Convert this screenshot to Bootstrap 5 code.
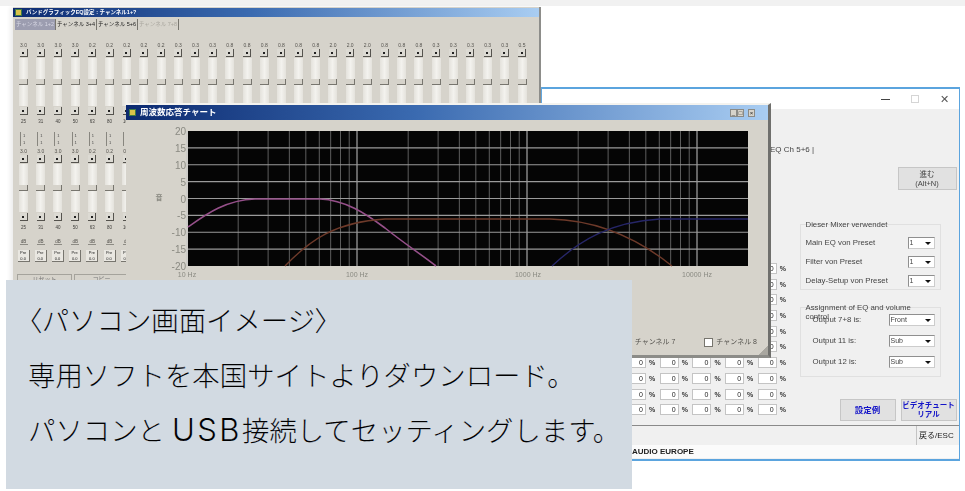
<!DOCTYPE html>
<html lang="ja">
<head>
    <meta charset="UTF-8">
    <meta name="viewport" content="width=device-width, initial-scale=1.0">
    <title>パソコン画面イメージ</title>
    <link href="https://cdn.jsdelivr.net/npm/bootstrap@5.3.0/dist/css/bootstrap.min.css" rel="stylesheet">
    <style>
        html, body { height: 491px; overflow: hidden; }
        body { background: #fff; font-family: "Liberation Sans", "Noto Sans CJK JP", sans-serif; color: #222; }
        .top-strip { height: 6px; background: #f1f1f1; }
        .desk { position: relative; width: 965px; height: 485px; }

        /* windows on the desktop */
        .win-eq, .win-chart, .win-setup { position: absolute; }
        .win-chart, .win-setup { filter: blur(.45px); }
        .win-eq { filter: blur(.7px); left: 13px; top: 1px; width: 528px; height: 285px; background: #d6d3cb; border-right: 2px solid #8d8d8a; box-shadow: -3px 0 4px #eee; overflow: hidden; }
        .win-chart { left: 126px; top: 97px; width: 645px; height: 255px; background: #d6d3cb; border-top: 2px solid #f4f3ef; border-right: 3px solid #6f6f6c; border-bottom: 3px solid #8c8c88; }
        .win-setup { left: 541px; top: 81px; width: 419px; height: 374px; background: #f0f0f0; border: 1px solid #5ba4de; border-top-width: 2px; border-bottom-width: 2px; }

        .bar-old { background: linear-gradient(90deg, #0c2a70 0%, #3a6ab0 45%, #a9cdf2 100%); color: #fff; font-weight: 700; }
        .eq-title { height: 9px; margin-top: 1px; font-size: 5.5px; line-height: 9px; padding-left: 2px; }
        .chart-title { height: 15px; font-size: 8.5px; line-height: 15px; padding-left: 3px; padding-right: 13px; }
        .app-ico { width: 7px; height: 7px; background: #d8c24a; border: 1px solid #3f7a44; }
        .old-ctl { width: 7px; height: 8px; background: #d6d3cb; border: 1px solid #8a8a86; color: #222; font-size: 6px; line-height: 6px; text-align: center; font-weight: 400; }

        .eq-tabs { margin: 2px 0 0 2px; height: 11px; font-size: 5.5px; line-height: 11px; white-space: nowrap; }
        .eq-tab { width: 41px; text-align: center; border-right: 1px solid #77756e; }
        .eq-tab-on { background: #9c9db0; color: #d8d8e4; }
        .eq-tab-off { color: #aaa79f; }

        .eq-rows { padding: 12px 0 0 2px; }
        .eq-col { width: 17.2px; flex: none; display: flex; flex-direction: column; align-items: center; }
        .eq-val { height: 6px; font-size: 5px; line-height: 6px; color: #55534e; }
        .eq-arrow { width: 8px; height: 8px; margin-top: 1px; background: #dcdad3; border-right: 1px solid #55534e; border-bottom: 1px solid #55534e; display: flex; align-items: center; justify-content: center; }
        .eq-arrow i { width: 2px; height: 2px; background: #222; }
        .eq-track { width: 9px; height: 48px; margin-top: 1px; background: linear-gradient(90deg, #e4e2dc, #f3f2ee 50%, #e4e2dc); position: relative; }
        .eq-knob { position: absolute; left: 0; top: 21px; width: 9px; height: 6px; background: #d6d3cb; border-right: 1px solid #77756e; border-bottom: 1px solid #77756e; }
        .eq-hz { height: 7px; margin-top: 3px; font-size: 4.5px; line-height: 7px; color: #3e3d3a; }
        .eq-db { height: 6px; margin-top: 8px; font-size: 4.5px; line-height: 6px; color: #55534e; border-bottom: 1px solid #8d8b84; width: 8px; text-align: center; }
        .eq-mini { width: 7px; height: 14px; margin-top: 7px; font-size: 4px; line-height: 7px; text-align: center; color: #444; border-left: 1px solid #88867f; }
        .eq-pre { width: 12px; height: 12px; margin-top: 5px; background: #e9e7e1; border-right: 1px solid #77756e; border-bottom: 1px solid #77756e; font-size: 4px; line-height: 6px; text-align: center; }
        .eq-row2 { margin-top: 2px; }
        .eq-foot { margin: 12px 0 0 2px; gap: 2px; }
        .eq-foot div { width: 55px; height: 16px; border: 1px solid #a5a39c; font-size: 6px; line-height: 8px; text-align: center; color: #777; }

        /* chart */
        .chart-body { height: 235px; }
        .chart-svg { display: block; }
        .chart-svg text { font-family: "Liberation Sans", "Noto Sans CJK JP", sans-serif; fill: #8a8a82; }
        .chart-checks { margin-top: auto; padding: 0 11px 8px 0; gap: 29px; font-size: 7px; line-height: 10px; color: #55534e; }
        .old-check { width: 9px; height: 9px; margin-right: 3px; background: #fff; border: 1px solid #77756e; }
        .chart-corner { position: absolute; right: 0; bottom: 0; width: 10px; height: 10px; background: linear-gradient(135deg, transparent 50%, #a9a7a0 50%); }

        /* setup window */
        .setup-head { height: 20px; background: #fff; padding-right: 10px; gap: 21px; font-size: 11px; color: #555; }
        .setup-btn-min { width: 9px; height: 1px; background: #444; }
        .setup-btn-max { width: 8px; height: 8px; border: 1px solid #d5d5d5; }
        .setup-tabs { height: 51px; padding: 36px 0 0 228px; font-size: 8px; line-height: 10px; color: #444; }
        .setup-left { width: 253px; padding: 103px 0 0 85px; }
        .pct-row { height: 15.7px; font-size: 7px; }
        .pct-cell { width: 19px; height: 11px; background: #fff; border: 1px solid #c4c4c4; font-size: 7px; line-height: 9px; text-align: right; padding-right: 2px; }
        .pct-unit { width: 13.7px; padding-left: 3px; font-size: 7px; line-height: 11px; font-weight: 700; color: #333; }
        .setup-right { width: 165px; font-size: 7.8px; color: #444; }
        .setup-go { width: 59px; height: 23px; margin: 7px 0 0 103px; background: #e1e1e1; border: 1px solid #c6c6c6; font-size: 7.5px; line-height: 9px; text-align: center; padding-top: 2px; }
        .setup-grp { width: 141px; margin-left: 5px; border: 1px solid #e0e0e0; padding: 0 5px 0 5px; }
        .grp-one { height: 66px; margin-top: 34px; }
        .grp-two { height: 70px; margin-top: 17px; }
        .grp-title { height: 9px; margin-top: -5px; line-height: 9px; font-size: 7.8px; }
        .grp-two .grp-title { width: 112px; }
        .grp-row { height: 19px; }
        .grp-two .grp-row { height: 21px; padding-left: 7px; }
        .grp-first { margin-top: -3px; }
        .old-select { width: 27px; height: 12px; background: #fff; border: 1px solid #8f8f8f; border-right-color: #ccc; border-bottom-color: #ccc; font-size: 7px; line-height: 10px; padding-left: 1px; position: relative; }
        .old-select::after { content: ""; position: absolute; right: 3px; top: 4px; border: 3px solid transparent; border-top-color: #111; }
        .sel-wide { width: 46px; }
        .setup-acts { margin: 22px 0 0 45px; gap: 5px; }
        .setup-act { width: 56px; height: 22px; background: #e1e1e1; border: 1px solid #c6c6c6; color: #1414c8; font-weight: 700; font-size: 7.5px; line-height: 9px; text-align: center; }
        .setup-act-big { font-size: 8.5px; }
        .setup-status { height: 20px; margin-top: 4px; border-top: 1px solid #8a8a8a; font-size: 8px; line-height: 20px; }
        .status-esc { width: 43px; border-left: 1px solid #c4c4c4; padding-left: 2px; }
        .setup-foot { height: 13px; background: #fbfbfb; padding-left: 90px; font-size: 8px; line-height: 13px; font-weight: 700; color: #222; }

        /* caption panel */
        .cap-panel { position: absolute; left: 6px; top: 274px; width: 626px; height: 209px; background: #d2dae2; padding: 12px 0 0 22px; color: #000; font-family: "Noto Sans CJK JP", "Liberation Sans", sans-serif; font-weight: 300; font-size: 27.4px; line-height: 55px; white-space: nowrap; -webkit-text-stroke: .1px #d2dae2; }
        .cap-panel p { margin: 0; height: 55px; }
        .cap-brk { font-feature-settings: "palt"; }
        .cap-latin { font-family: "Inter", "Liberation Sans", sans-serif; font-weight: 300; font-size: 31px; letter-spacing: 2.5px; margin-left: 7px; }
    </style>
</head>
<body>
    <div class="top-strip"></div>
    <div class="desk">

        <div class="win-setup d-flex flex-column">
            <div class="setup-head d-flex align-items-center justify-content-end">
                <span class="setup-btn-min"></span><span class="setup-btn-max"></span><span>✕</span>
            </div>
            <div class="setup-tabs">EQ Ch 5+6 |</div>
            <div class="d-flex">
                <div class="setup-left" id="pctGrid"></div>
                <div class="setup-right">
                    <div class="setup-go">進む<br>(Alt+N)</div>
                    <div class="setup-grp grp-one">
                        <div class="grp-title">Dieser Mixer verwendet</div>
                        <div class="grp-row d-flex align-items-center justify-content-between mt-1">Main EQ von Preset<div class="old-select">1</div></div>
                        <div class="grp-row d-flex align-items-center justify-content-between">Filter von Preset<div class="old-select">1</div></div>
                        <div class="grp-row d-flex align-items-center justify-content-between">Delay-Setup von Preset<div class="old-select">1</div></div>
                    </div>
                    <div class="setup-grp grp-two">
                        <div class="grp-title">Assignment of EQ and volume control</div>
                        <div class="grp-row grp-first d-flex align-items-center justify-content-between">Output 7+8 is:<div class="old-select sel-wide">Front</div></div>
                        <div class="grp-row d-flex align-items-center justify-content-between">Output 11 is:<div class="old-select sel-wide">Sub</div></div>
                        <div class="grp-row d-flex align-items-center justify-content-between">Output 12 is:<div class="old-select sel-wide">Sub</div></div>
                    </div>
                    <div class="setup-acts d-flex">
                        <div class="setup-act setup-act-big d-flex align-items-center justify-content-center">設定例</div>
                        <div class="setup-act d-flex align-items-center justify-content-center">ビデオチュートリアル</div>
                    </div>
                </div>
            </div>
            <div class="setup-status d-flex justify-content-end"><div class="status-esc">戻る/ESC</div></div>
            <div class="setup-foot">AUDIO EUROPE</div>
        </div>

        <div class="win-eq">
            <div class="eq-title bar-old d-flex align-items-center gap-1"><span class="app-ico"></span>バンドグラフィックEQ設定 : チャンネル1+?</div>
            <div class="eq-tabs d-flex">
                <div class="eq-tab eq-tab-on">チャンネル 1+2</div>
                <div class="eq-tab">チャンネル 3+4</div>
                <div class="eq-tab">チャンネル 5+6</div>
                <div class="eq-tab eq-tab-off">チャンネル 7+8</div>
            </div>
            <div class="eq-rows">
                <div class="d-flex" id="eqRow1"></div>
                <div class="d-flex eq-row2" id="eqRow2"></div>
                <div class="eq-foot d-flex"><div>リセット</div><div>コピー</div></div>
            </div>
        </div>

        <div class="win-chart">
            <div class="chart-title bar-old d-flex align-items-center justify-content-between">
                <span class="d-flex align-items-center gap-1"><span class="app-ico"></span>周波数応答チャート</span>
                <span class="d-flex"><span class="old-ctl">_</span><span class="old-ctl">□</span><span class="old-ctl ms-1">×</span></span>
            </div>
            <div class="chart-body d-flex flex-column">
                <svg class="chart-svg" id="chartSvg" width="640" height="165" viewBox="126 120 640 165"></svg>
                <div class="chart-checks d-flex justify-content-end">
                    <span class="d-flex align-items-center">チャンネル 7</span>
                    <span class="d-flex align-items-center"><span class="old-check"></span>チャンネル 8</span>
                </div>
            </div>
            <div class="chart-corner"></div>
        </div>

        <div class="cap-panel">
            <p><span class="cap-brk">〈</span>パソコン画面イメージ<span class="cap-brk">〉</span></p>
            <p>専用ソフトを本国サイトよりダウンロード。</p>
            <p>パソコンと<span class="cap-latin">USB</span>接続してセッティングします。</p>
        </div>
    </div>

    <script src="https://cdn.jsdelivr.net/npm/bootstrap@5.3.0/dist/js/bootstrap.bundle.min.js"></script>
    <script>
        // slider columns of the graphic EQ window
        const eqVals = ['3.0','3.0','3.0','3.0','0.2','0.2','0.2','0.2','0.2','0.3','0.3','0.3','0.8','0.8','0.8','0.8','0.8','0.8','2.0','2.0','2.0','0.8','0.8','0.8','0.3','0.3','0.3','0.3','0.3','0.5'];
        const eqHz = ['25','31','40','50','63','80','100','125','160','200','250','315','400','500','630','800','1k','1.2k','1.6k','2k','2.5k','3.1k','4k','5k','6.3k','8k','10k','12k','16k','20k'];

        function eqCol(i, second) {
            let html = '<div class="eq-col">';
            html += '<div class="eq-val">' + eqVals[i] + '</div>';
            html += '<div class="eq-arrow"><i></i></div>';
            html += '<div class="eq-track"><div class="eq-knob"></div></div>';
            html += '<div class="eq-arrow"><i></i></div>';
            html += '<div class="eq-hz">' + eqHz[i] + '</div>';
            if (second) {
                html += '<div class="eq-db">dB</div><div class="eq-pre">Pre<br>0.0</div>';
            } else {
                html += '<div class="eq-mini">1<br>1</div>';
            }
            return html + '</div>';
        }

        let row1 = '', row2 = '';
        eqVals.forEach((v, i) => { row1 += eqCol(i, false); row2 += eqCol(i, true); });
        document.getElementById('eqRow1').innerHTML = row1;
        document.getElementById('eqRow2').innerHTML = row2;

        // percent fields of the setup window
        let pct = '';
        for (let r = 0; r < 10; r++) {
            pct += '<div class="pct-row d-flex">';
            for (let c = 0; c < 5; c++) {
                pct += '<div class="pct-cell">0</div><div class="pct-unit">%</div>';
            }
            pct += '</div>';
        }
        document.getElementById('pctGrid').innerHTML = pct;

        // frequency chart, drawn in page coordinates
        const px0 = 188, px1 = 748, py0 = 131, py1 = 266, decade = 170;
        let svg = '<rect x="' + px0 + '" y="' + py0 + '" width="' + (px1 - px0) + '" height="' + (py1 - py0) + '" fill="#050505"/>';
        [10, 100, 1000].forEach((f, d) => {
            for (let m = 1; m < 10; m++) {
                const x = px0 - 1 + decade * d + decade * Math.log10(m);
                svg += '<line x1="' + x + '" x2="' + x + '" y1="' + py0 + '" y2="' + py1 + '" stroke="' + (m === 1 ? '#c4c4c4' : '#5e5e5e') + '"/>';
            }
        });
        const xLast = px0 - 1 + decade * 3;
        svg += '<line x1="' + xLast + '" x2="' + xLast + '" y1="' + py0 + '" y2="' + py1 + '" stroke="#c4c4c4"/>';
        for (let db = 20; db >= -20; db -= 5) {
            const y = py0 + (20 - db) * 3.375;
            if (db > -20 && db < 20) svg += '<line x1="' + px0 + '" x2="' + px1 + '" y1="' + y + '" y2="' + y + '" stroke="#9a9a9a" stroke-width="1.2"/>';
            svg += '<text x="186" y="' + (y + 4) + '" text-anchor="end" font-size="10">' + db + '</text>';
        }
        svg += '<path d="M188 227C205 215 225 200 255 199L320 199C345 200 365 213 385 228C405 244 422 255 436 266" fill="none" stroke="#96508a" stroke-width="1.6"/>';
        svg += '<path d="M285 266C310 240 335 222 385 219L550 219C590 220 630 232 672 266" fill="none" stroke="#6e3a2a" stroke-width="1.4"/>';
        svg += '<path d="M552 266C580 240 610 222 660 219L748 219" fill="none" stroke="#262668" stroke-width="1.4"/>';
        [['10 Hz', 187], ['100 Hz', 357], ['1000 Hz', 528], ['10000 Hz', 697]].forEach(t => {
            svg += '<text x="' + t[1] + '" y="277" text-anchor="middle" font-size="7">' + t[0] + '</text>';
        });
        svg += '<text x="159" y="200" text-anchor="middle" font-size="7" font-weight="700">音</text>';
        document.getElementById('chartSvg').innerHTML = svg;
    </script>
</body>
</html>
